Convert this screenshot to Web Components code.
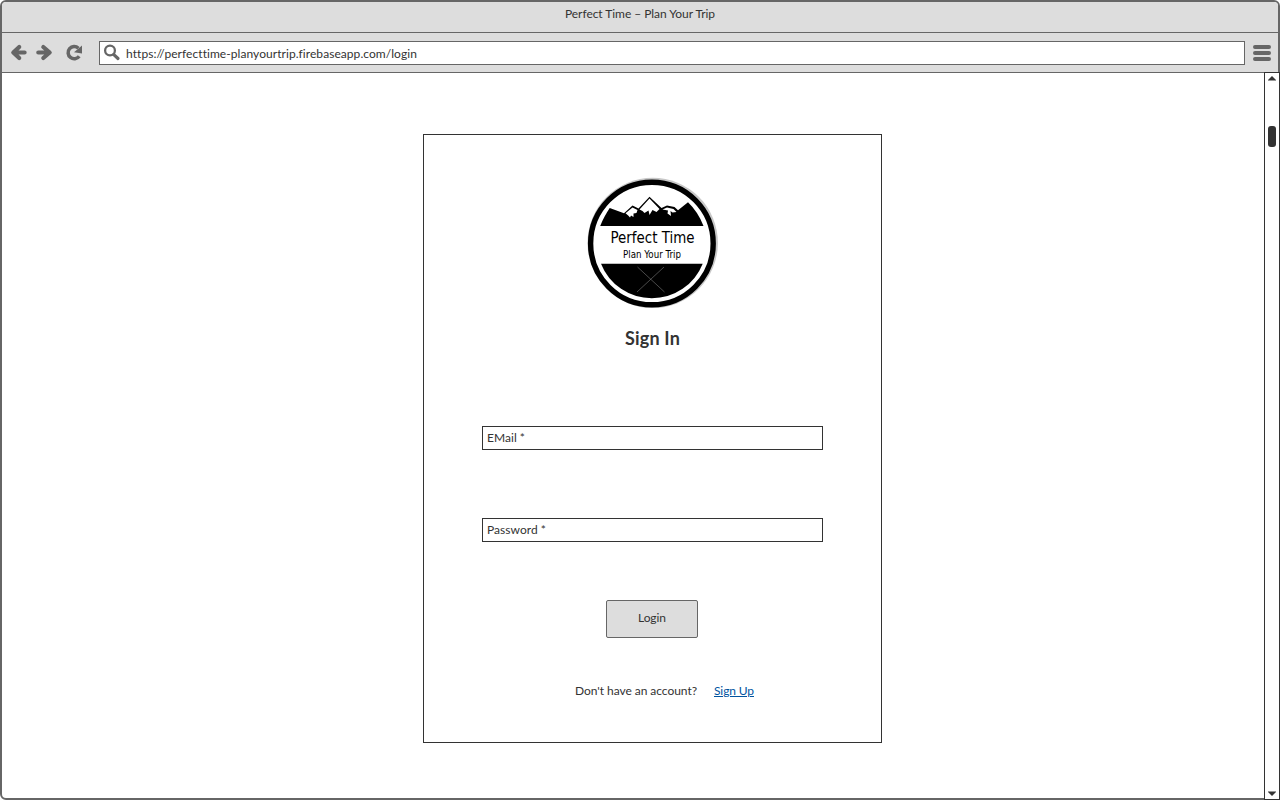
<!DOCTYPE html>
<html lang="en">
<head>
<meta charset="utf-8">
<title>Perfect Time – Plan Your Trip</title>
<style>
html,body{margin:0;height:100%;overflow:hidden;background:#fff}
body{font:12px/16px Lato,"Liberation Sans",sans-serif;color:#333}
</style>
</head>
<body>
<browser-window>
  <fit-text slot="title" width="150">Perfect Time – Plan Your Trip</fit-text>
  <nav-bar slot="bar"><fit-text width="291">https://perfecttime-planyourtrip.firebaseapp.com/login</fit-text></nav-bar>
  <login-card></login-card>
  <scroll-bar slot="scroll"></scroll-bar>
</browser-window>
<script>
const define = (name, html, ready) => {
  const template = document.createElement('template');
  template.innerHTML = html;
  customElements.define(name, class extends HTMLElement {
    constructor() {
      super();
      this.attachShadow({mode: 'open'}).append(template.content.cloneNode(true));
    }
    connectedCallback() { if (ready) ready(this); }
  });
};

define('browser-window', `<style>
:host{display:grid;grid-template-rows:30px 41px 1fr;box-sizing:border-box;height:800px;width:1280px;border:2px solid #666;border-radius:6px;background:#fff}
header{display:flex;justify-content:center;box-sizing:border-box;padding-top:4px;background:#ddd;border-radius:4px 4px 0 0}
main{display:grid;grid-template-columns:1fr 16px;margin:-1px -2px -2px 0;min-height:0}
.page{display:flex;align-items:flex-start;padding:62px 0 0 421px}
</style>
<header><slot name="title"></slot></header>
<slot name="bar"></slot>
<main><div class="page"><slot></slot></div><slot name="scroll"></slot></main>`);

define('nav-bar', `<style>
:host{display:flex;align-items:center;box-sizing:border-box;height:41px;background:#ddd;border:solid #666;border-width:1px 0;padding:0 7px 0 7px}
svg{display:block;flex:none}
.tools{margin-bottom:2px}
.url{display:flex;align-items:center;flex:1;box-sizing:border-box;height:24px;background:#fff;border:1px solid #666;margin:1px 8px 0 16px;padding-left:3px}
.url svg{margin-right:5px}
.url slot{display:block;padding-top:2px}
</style>
<svg class="tools" width="74" height="20" viewBox="0 0 74 20" fill="none" stroke="#666" stroke-width="4.200" stroke-linejoin="round">
<path d="M10.200 5 4.300 10.500l5.900 5.500M4.500 10.500H15.600" stroke-linecap="round"/>
<path d="M34.300 5 40.700 10.500l-6.400 5.500M40 10.500H29.300" stroke-linecap="round"/>
<path d="M70.200 14.200a6.100 6.100 0 1 1-.8-8" stroke-width="3.500"/>
<path d="M73 3.500v8l-8-1.300z" fill="#666" stroke="none"/></svg>
<div class="url"><svg width="18" height="18" viewBox="0 0 18 18" fill="none" stroke="#666"><circle cx="7" cy="6.500" r="4.900" stroke-width="2.300"/><path d="m10.800 10.600 4.200 3.900" stroke-width="3.200" stroke-linecap="round"/></svg><slot></slot></div>
<svg class="tools" width="18" height="18" viewBox="0 0 18 18" stroke="#666" stroke-width="4" stroke-linecap="round"><path d="M2 4h14M2 10h14M2 16h14"/></svg>`);

define('scroll-bar', `<style>
:host{display:flex;flex-direction:column;align-items:center;box-sizing:border-box;border:1px solid #333;background:#fff;height:728px}
svg{display:block;flex:none}
.up{margin-top:3px}.down{margin:auto 0 3px}
.thumb{width:8px;height:21px;border-radius:3px;background:#333;margin-top:45px}
</style>
<svg class="up" width="8" height="5"><path d="M0 4 4 0l4 4v.500H0z" fill="#333"/></svg>
<div class="thumb"></div>
<svg class="down" width="8" height="5"><path d="M0 .500h8V1L4 5 0 1z" fill="#333"/></svg>`);

define('trip-logo', `<style>:host{display:block;width:145px;height:145px}svg{display:block}</style>
<svg width="145" height="145" viewBox="0 0 145 145">
<circle cx="72.700" cy="72.900" r="65.200" fill="#c8c8c8"/>
<circle cx="71.900" cy="73.500" r="61.300" fill="#fff" stroke="#000" stroke-width="5.400"/>
<path d="M20.200 56C23 49 26 43.500 29.700 38L44 43.200l8.500-7.700 6 3 11-11.700L81.500 38l5.500-2.600 7.500 1.600 3.500 3.300 10-8q10 9.500 15.500 23.700z"/>
<path d="m45.500 43.200 7-5.700 5 2.500-1 3-3 .5v3.500l-2.500-1.500-1 2-1.800-2zM59.500 39.500 69.500 28.500 79.500 39l-3 3-4-2-3 5-1-4.500-4 2.500-2-2zM82.500 39.500l4.500-2 6.500 1.500 3 3-4 .5-2-1.500.5 5-3.500-2.500.5-3z" fill="#fff"/>
<path d="M21 93.700H122.700A54.700 54.700 0 0 1 21 93.700z"/>
<path d="m57.500 97 27 25M84 97l-27 25" stroke="#888" stroke-width=".55"/>
<g font-family="DejaVu Sans,sans-serif" fill="#000" text-anchor="middle">
<text x="72.500" y="73" font-size="16.500" textLength="84" lengthAdjust="spacingAndGlyphs">Perfect Time</text>
<text x="72" y="88" font-size="10" textLength="58" lengthAdjust="spacingAndGlyphs">Plan Your Trip</text></g>
</svg>`);

define('text-field', `<style>:host{display:flex;align-items:center;box-sizing:border-box;width:341px;height:24px;border:1px solid #333;padding-left:4px;background:#fff}</style><slot></slot>`);

define('push-button', `<style>:host{display:flex;justify-content:center;box-sizing:border-box;width:92px;height:38px;border:1px solid #666;border-radius:2px;background:#ddd;padding-top:9px}</style><slot></slot>`);

define('login-card', `<style>
:host{display:flex;flex-direction:column;align-items:center;box-sizing:border-box;width:459px;height:609px;border:1px solid #333;background:#fff;padding-top:35px}
h1{font-size:18px;line-height:24px;font-weight:700;margin:11px 0 0}
.email{margin-top:76px}.pass{margin-top:68px}
push-button{margin:58px 1px 0 0}
p{display:flex;gap:17px;margin:45px 0 0 24px}
a{color:#00539f;text-decoration:underline;text-underline-offset:1px}
</style>
<trip-logo></trip-logo>
<h1><fit-text width="55">Sign In</fit-text></h1>
<text-field class="email"><fit-text width="38">EMail *</fit-text></text-field>
<text-field class="pass"><fit-text width="59">Password *</fit-text></text-field>
<push-button><fit-text width="28">Login</fit-text></push-button>
<p><fit-text width="122">Don't have an account?</fit-text><a><fit-text width="40">Sign Up</fit-text></a></p>`);

// Spreads its letters so that the line takes exactly the given width.
define('fit-text', `<style>:host{display:block;white-space:nowrap;text-decoration:inherit}span{display:inline-block;text-decoration:inherit}</style><span><slot></slot></span>`, el => {
  const span = el.shadowRoot.querySelector('span');
  const width = +el.getAttribute('width');
  el.style.width = width + 'px';
  span.style.letterSpacing = '0.001px';
  const gap = (width - span.getBoundingClientRect().width) / el.textContent.length;
  span.style.letterSpacing = gap + 'px';
});
</script>
</body>
</html>
